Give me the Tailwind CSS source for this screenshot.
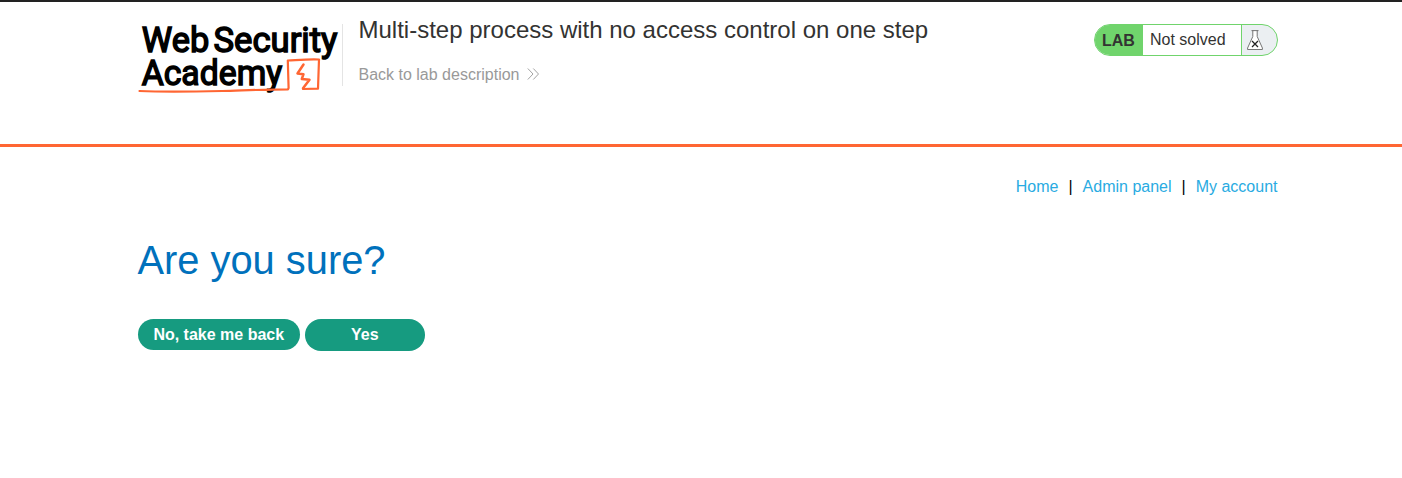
<!DOCTYPE html>
<html lang="en">
<head>
<meta charset="utf-8">
<title>Multi-step process with no access control on one step</title>
<script src="https://cdn.jsdelivr.net/npm/@tailwindcss/browser@4"></script>
</head>
<body class="h-[478px] overflow-hidden bg-white font-['Liberation_Sans',Arial,sans-serif] text-base text-[#333332]">
<div class="h-0.5 bg-[#222]"></div>
<header class="h-[145px] border-b-3 border-[#ff6633] pl-[138px]">
  <div class="flex w-[1140px] items-start pt-[22px]">
    <svg class="h-[74px] w-[204px] shrink-0 overflow-visible" viewBox="138 24 204 74" fill="none">
      <g fill="#000" stroke="#000" stroke-width="1.500" font-family="Roboto, sans-serif" font-weight="400" font-size="35.500">
        <text x="141.700" y="52.200" textLength="67.500" lengthAdjust="spacingAndGlyphs">Web</text>
        <text x="213.500" y="52.200" textLength="124" lengthAdjust="spacingAndGlyphs">Security</text>
        <text x="141.700" y="84.500" textLength="140.500" lengthAdjust="spacingAndGlyphs">Academy</text>
      </g>
      <g stroke="#ff6633" stroke-linecap="round" stroke-linejoin="round">
        <path stroke-width="2.200" d="M139.500 91C166 92 196 91.500 222 91C246 90.300 268 89.300 288 89.300L288.600 88L287.800 60.500C298 60 309 59 319 59.500L318.500 74L318 88.700L303 89"/>
        <path stroke-width="2.500" d="M303.500 64.500L297.500 73.500L303.500 74.200L301.800 79L309.500 79.800L303 88.300"/>
      </g>
    </svg>
    <div class="h-[62px] w-px bg-[#e4e4e4]"></div>
    <div class="-mt-2.5 ml-[15.500px] flex-1">
      <h2 class="text-2xl leading-8">Multi-step process with no access control on one step</h2>
      <a class="mt-[17px] flex items-center gap-2 leading-6 text-[#999]">Back to lab description
        <svg class="-mt-0.5 h-3 w-3" viewBox="0 0 12 12" fill="none" stroke="#999" stroke-width=".9"><path d="M.8.5L6 6L.8 11.500M6.300.5L11.500 6L6.300 11.500"/></svg>
      </a>
    </div>
    <div class="flex h-8 w-[184px] overflow-hidden rounded-full border border-[#70d46c] bg-[#ebeff2]">
      <span class="w-12 bg-[#70d46c] pl-[7px] leading-[31px] font-bold">LAB</span>
      <span class="w-[99px] border-r border-[#70d46c] bg-white pl-[7px] leading-[29px]">Not solved</span>
      <svg class="mt-[5px] ml-[5px] h-5 w-4" viewBox="0 0 16 20" fill="none" stroke="#666" stroke-width=".9">
        <path fill="#fff" d="M4.500.6H11.500M5.800.8V6.500L.6 18V19.500H15.400V18L10.200 6.500V.8"/>
        <path stroke="#222" stroke-width="1.300" d="M5 11L11 17M11 11L5 17"/>
      </svg>
    </div>
  </div>
</header>
<main class="ml-[137.500px] w-[1140px]">
  <nav class="flex justify-end pt-7 leading-6">
    <a class="text-[#29abe2]">Home</a><span class="mx-2.5 text-black">|</span><a class="text-[#29abe2]">Admin panel</a><span class="mx-2.5 text-black">|</span><a class="text-[#29abe2]">My account</a>
  </nav>
  <h1 class="mt-[37px] text-[39.840px] leading-[48px] text-[#0071bc]">Are you sure?</h1>
  <div class="mt-[35px] flex items-start gap-[5px] font-bold text-white">
    <button class="h-[31px] w-[162px] rounded-full bg-[#169b80] pl-[.5px] leading-[31px]">No, take me back</button>
    <button class="h-8 w-[120px] rounded-full bg-[#169b80] pb-px pl-[.5px] leading-[31px]">Yes</button>
  </div>
</main>
</body>
</html>
